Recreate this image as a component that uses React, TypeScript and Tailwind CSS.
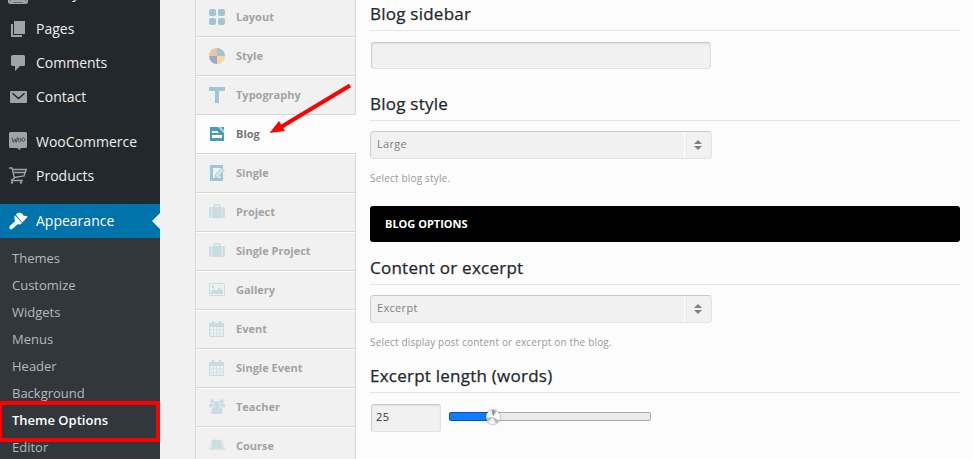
import type { ReactNode } from "react";

const adminIcon = "size-5 shrink-0 overflow-visible fill-current";

const GalleryMenuIcon = () => (
  <svg viewBox="0 0 20 20" className={adminIcon}><rect x="0" y="1" width="20" height="20" rx="2.500" /><path d="M2.500 12v6.500M17.500 12v6.500M5 19.500h10" stroke="#6c7175" strokeWidth="1" fill="none" /></svg>
);
const PagesIcon = () => (
  <svg viewBox="0 0 20 20" className={adminIcon}><path d="M6 2h11v13H6zM3 5h2v11h9v2H3z" /></svg>
);
const CommentIcon = () => (
  <svg viewBox="0 0 20 20" className={adminIcon}><path d="M5 2h10.500q1.500 0 1.500 1.500v8q0 1.500-1.500 1.500H12l-5 5v-5H5q-2 0-2-1.500v-8Q3 2 5 2z" /></svg>
);
const MailIcon = () => (
  <svg viewBox="0 0 20 20" className={adminIcon}><rect x="2" y="4" width="17" height="12" rx="1" /><path d="M4.500 6.300l6 5.200 6-5.200" fill="none" stroke="#23282d" strokeWidth="1.500" /></svg>
);
const WooIcon = () => (
  <svg viewBox="0 0 20 20" className={adminIcon}><path d="M2.500 0h15q1.500 0 1.500 1.500v13q0 1.500-1.500 1.500H12.500l-.5 2.200L9 16H2.500Q1 16 1 14.500v-13Q1 0 2.500 0z" /><path d="M4 5.500l1.200 5L7 7l1.200 3.500L9.500 5" fill="none" stroke="#4a4f53" strokeWidth="1" /><circle cx="11.500" cy="8" r="1.600" fill="none" stroke="#4a4f53" /><circle cx="15.300" cy="7.600" r="1.600" fill="none" stroke="#4a4f53" /></svg>
);
const CartIcon = () => (
  <svg viewBox="0 0 20 20" className={adminIcon}><path d="M1 2h3l2.500 10.500M3 14.500h12M4.800 3.500H18.300L16 9.800 6 11.500M5.500 6.500h11.500" fill="none" stroke="currentColor" strokeWidth="1.300" /><path d="M6.500 12L3 14.500" stroke="currentColor" strokeWidth="1.200" /><circle cx="4" cy="16.500" r="1.200" /><circle cx="13" cy="16.500" r="1.200" /></svg>
);
const BrushIcon = () => (
  <svg viewBox="0 0 20 20" className={adminIcon}><path d="M8.500 2.800L11.500 1.500l3 1.200.8 1.800 4.600.9-5.500 6L8 3.700z" /><path d="M7 4.300l7 7.600-1.800 1.500-2.700-.2-4.900 4.600q-1.600 1.200-2.800 0-1.200-1.400.2-3l5-4.500-.8-3.800z" /></svg>
);

const tabIcon = "size-4 shrink-0 fill-current";

const LayoutIcon = () => (
  <svg viewBox="0 0 16 16" className={tabIcon}><rect width="7" height="7" rx="2" /><rect x="9" width="7" height="7" rx="2" /><rect y="9" width="7" height="7" rx="2" /><rect x="9" y="9" width="7" height="7" rx="2" /></svg>
);
const StyleIcon = () => (
  <svg viewBox="0 0 16 16" className={tabIcon}><path d="M8 8V0a8 8 0 0 1 8 8z" /><path d="M8 8H0a8 8 0 0 1 8-8z" fill="#f1c59b" /><path d="M8 8v8a8 8 0 0 1-8-8z" fill="#9ea6cf" /><path d="M8 8h8a8 8 0 0 1-8 8z" fill="#f5da9a" /></svg>
);
const TypeIcon = () => (
  <svg viewBox="0 0 16 16" className={tabIcon}><path d="M0 0h16v4h-6v12H6V4H0z" /></svg>
);
const BlogIcon = () => (
  <svg viewBox="0 0 16 16" className={tabIcon}><path d="M1 1h8l6 6v8H1z" /><path d="M9.500 1H11l4 4v1.500z" opacity=".55" /><path d="M11.500 1H15v3.500z" /><path d="M3 5h5.500l1 2H3zM3 9h10v3H3z" fill="#fff" /></svg>
);
const EditIcon = () => (
  <svg viewBox="0 0 16 16" className={tabIcon}><path d="M1 0h13v3l-1.500 1-.5-1H4v10h7.500V9.500L14 7v9H1z" /><path d="M12.500 2.800l2.800 2.500-6 6.500-3.300 1.200.7-3.500z" fill="#d3e4ea" stroke="currentColor" strokeWidth=".8" /></svg>
);
const BriefcaseIcon = () => (
  <svg viewBox="0 0 16 16" className={tabIcon}><path d="M3.300 3H4.500V1.500q0-1.500 1.500-1.500h4q1.500 0 1.500 1.500V3h1.200v11H3.300zM6 3h4V1.500H6zM2.500 3v11H2q-2 0-2-2V5q0-2 2-2zm11 0h.5q2 0 2 2v7q0 2-2 2h-.5z" fillRule="evenodd" /></svg>
);
const GalleryIcon = () => (
  <svg viewBox="0 0 16 16" className={tabIcon}><rect x=".5" y="1.500" width="15" height="12" rx=".7" fill="none" stroke="currentColor" /><circle cx="3.800" cy="4.800" r="1.500" /><path d="M2 12V9.500L5 7l2 2 3.500-4L14 8.500V12z" /></svg>
);
const CalendarIcon = () => (
  <svg viewBox="0 0 16 16" className={tabIcon}><rect y="2" width="15" height="14" rx="1" /><rect x="2.500" y="0" width="3" height="4" rx="1" /><rect x="9.500" y="0" width="3" height="4" rx="1" /><path d="M1.200 6h2.800v2.500H1.200zm3.600 0h2.500v2.500H4.800zm3.300 0h2.500v2.500H8.100zm3.400 0h2.500v2.500h-2.500zM1.200 9.200h2.800v2.500H1.200zm3.600 0h2.500v2.500H4.800zm3.300 0h2.500v2.500H8.100zm3.400 0h2.500v2.500h-2.500zM1.200 12.500h2.800v2.200H1.200zm3.600 0h2.500v2.200H4.800zm3.300 0h2.500v2.200H8.100zm3.400 0h2.500v2.200h-2.500z" fill="#f1f1f1" /></svg>
);
const UsersIcon = () => (
  <svg viewBox="0 0 16 16" className={tabIcon}><circle cx="8" cy="5" r="3" /><path d="M4.500 8h7q2.500 2 2.500 5 0 2-2 2H4q-2 0-2-2 0-3 2.500-5z" /><circle cx="3.200" cy="2.300" r="2.100" /><circle cx="12.800" cy="2.300" r="2.100" /><path d="M0 8q-.2-3.500 1.500-3.500h2.700q.2 2 1 2.800-1.500 0-2.700 1H1q-1 0-1-.3zm16 0q.2-3.500-1.500-3.500h-2.700q-.2 2-1 2.800 1.500 0 2.700 1H15q1 0 1-.3z" /></svg>
);
const CourseIcon = () => (
  <svg viewBox="0 0 16 16" className={tabIcon}><path d="M1.500 2.500Q6 1 8 2.500q2-1.500 6.500 0L16 11H0z" opacity=".4" /><path d="M3.500 2Q7 1 7.800 2.500v8Q6 9.500 3 10.500zM8.300 2.500Q9.500 1 12 2l1.200 8.500Q10 9.500 8.300 10.800z" /><path d="M0 11h16" fill="none" stroke="currentColor" /></svg>
);

type Item = { label: string; icon: ReactNode; active?: boolean };

const mainItems: Item[] = [
  { label: "Pages", icon: <PagesIcon /> },
  { label: "Comments", icon: <CommentIcon /> },
  { label: "Contact", icon: <MailIcon /> },
];
const shopItems: Item[] = [
  { label: "WooCommerce", icon: <WooIcon /> },
  { label: "Products", icon: <CartIcon /> },
];
const subItems = ["Themes", "Customize", "Widgets", "Menus", "Header", "Background", "Theme Options", "Editor"];

const tabs: (Item & { faded?: boolean })[] = [
  { label: "Layout", icon: <LayoutIcon /> },
  { label: "Style", icon: <StyleIcon /> },
  { label: "Typography", icon: <TypeIcon /> },
  { label: "Blog", icon: <BlogIcon />, active: true },
  { label: "Single", icon: <EditIcon /> },
  { label: "Project", icon: <BriefcaseIcon />, faded: true },
  { label: "Single Project", icon: <BriefcaseIcon />, faded: true },
  { label: "Gallery", icon: <GalleryIcon />, faded: true },
  { label: "Event", icon: <CalendarIcon />, faded: true },
  { label: "Single Event", icon: <CalendarIcon />, faded: true },
  { label: "Teacher", icon: <UsersIcon />, faded: true },
  { label: "Course", icon: <CourseIcon />, faded: true },
];

function AdminItem({ label, icon, active }: Item) {
  return (
    <div className={`relative flex h-[34px] shrink-0 items-center gap-2 pl-2 text-sm ${active ? "bg-[#0073aa] text-white" : "text-[#eee]"}`}>
      <span className={active ? "text-white" : "text-[#9ea3a8]"}>{icon}</span>
      <span>{label}</span>
      {active && <span className="absolute right-0 top-[9px] border-y-8 border-r-8 border-y-transparent border-r-[#f1f1f1]" />}
    </div>
  );
}

function Heading({ children }: { children: ReactNode }) {
  return <h3 className="h-[30px] shrink-0 border-b border-[#e5e5e5] text-[17px] leading-[26px] font-normal tracking-[0.24px] text-[#23282d] [-webkit-text-stroke:0.25px]">{children}</h3>;
}

function Select({ value }: { value: string }) {
  return (
    <div className="mt-[10px] flex h-7 w-[342px] shrink-0 items-stretch rounded border border-t-[#c9c9c9] border-r-[#e2e2e2] border-b-[#e2e2e2] border-l-[#d0d0d0] bg-[#f1f1f1] text-[11px] tracking-[0.32px] text-[#808080]">
      <span className="flex-1 pl-1.5 leading-[24px]">{value}</span>
      <span className="flex w-[27px] items-center justify-center border-l border-white">
        <svg viewBox="0 0 8 10" className="h-[10px] w-2 fill-[#808080]"><path d="M4 0l4 4H0zM0 6h8l-4 4z" /></svg>
      </span>
    </div>
  );
}

export default function App() {
  return (
    <div className="relative flex h-[459px] w-[973px] overflow-hidden bg-[#f1f1f1] font-['Open_Sans',sans-serif]">
      <aside className="relative flex w-40 shrink-0 flex-col bg-[#23282d]">
        <div className="-mt-6 mb-0.5 tracking-[-0.4px]"><AdminItem label="Gallery" icon={<GalleryMenuIcon />} /></div>
        {mainItems.map((item) => <AdminItem key={item.label} {...item} />)}
        <div className="h-[11px] shrink-0" />
        {shopItems.map((item) => <AdminItem key={item.label} {...item} />)}
        <div className="h-[11px] shrink-0" />
        <AdminItem label="Appearance" icon={<BrushIcon />} active />
        <ul className="flex-1 bg-[#32373c] pt-[7px] pl-3 text-[13px]">
          {subItems.map((label) => (
            <li key={label} className={`h-[27px] leading-[27px] ${label === "Theme Options" ? "font-semibold text-white" : "text-[#b4b9be]"}`}>{label}</li>
          ))}
        </ul>
        <div className="absolute top-[401px] left-0 h-[41px] w-40 border-y-4 border-r-4 border-l-2 border-[#fe0000]" />
      </aside>

      <nav className="ml-[35px] flex w-[161px] shrink-0 flex-col border-l border-[#d9d9d9]">
        <div className="-mt-0.5" />
        {tabs.map(({ label, icon, active, faded }) => (
          <div
            key={label}
            className={`flex h-[39px] shrink-0 items-center gap-[11px] border-b border-b-[#d6d6d6] pl-[13px] text-[11px] font-bold ${
              active ? "bg-[#fcfcfc] text-[#777]" : "border-r border-r-[#d9d9d9] text-[#a3a3a3] shadow-[inset_0_1px_0_#fff]"
            }`}
          >
            <span className={active ? "text-[#4a9bb5]" : faded ? "text-[#c8dce3]" : "text-[#9fc6d2]"}>{icon}</span>
            <span>{label}</span>
          </div>
        ))}
      </nav>

      <main className="flex flex-1 flex-col bg-[#fcfcfc] pt-px pr-[13px] pl-[14px]">
        <Heading>Blog sidebar</Heading>
        <div className="mt-[11px] ml-px h-[27px] w-[340px] shrink-0 rounded-[3px] border border-t-[#c9c9c9] border-r-[#e2e2e2] border-b-[#e2e2e2] border-l-[#d0d0d0] bg-[#f1f1f1] shadow-[inset_0_1px_2px_rgba(0,0,0,0.07)]" />
        <div className="h-[22px] shrink-0" />
        <Heading>Blog style</Heading>
        <Select value="Large" />
        <p className="mt-[11px] h-4 shrink-0 text-[10px] leading-4 tracking-[0.18px] text-[#9a9a9a]">Select blog style.</p>
        <div className="mt-5 h-9 shrink-0 rounded-[3px] bg-black pl-[15px] text-[11px] leading-9 font-bold text-white">BLOG OPTIONS</div>
        <div className="h-[13px] shrink-0" />
        <Heading>Content or excerpt</Heading>
        <Select value="Excerpt" />
        <p className="mt-[11px] h-4 shrink-0 text-[10px] leading-4 tracking-[0.18px] text-[#9a9a9a]">Select display post content or excerpt on the blog.</p>
        <div className="h-[13px] shrink-0" />
        <Heading>Excerpt length (words)</Heading>
        <div className="mt-[11px] ml-px flex items-center">
          <div className="h-7 w-[70px] rounded-[3px] border border-t-[#c9c9c9] border-r-[#e2e2e2] border-b-[#e2e2e2] border-l-[#d0d0d0] bg-[#f1f1f1] pl-1 text-[11px] leading-[24px] tracking-[0.5px] text-[#32373c] shadow-[inset_0_1px_2px_rgba(0,0,0,0.07)]">25</div>
          <div className="relative mt-[-3px] ml-2 h-[9px] w-[202px] rounded-[2px] border border-[#aaa] bg-[#ebebeb]">
            <div className="-mt-px -ml-px h-[9px] w-11 rounded-l-[2px] border border-[#0059b8] bg-[#107efa]" />
            <div className="absolute -top-[3px] left-9 size-[14px] rounded-full bg-[conic-gradient(#777,#f5f5f5_12%,#fff_30%,#aaa_38%,#f5f5f5_48%,#eee_60%,#aaa_68%,#fff_78%,#eee_95%,#777)] shadow-[0_0_1px_1px_rgba(0,0,0,0.2)]" />
          </div>
        </div>
      </main>

      <svg viewBox="0 0 973 459" className="pointer-events-none absolute inset-0 size-full">
        <path d="M350 85.500L281 127" stroke="#fe0000" strokeWidth="4" />
        <path d="M269.500 133l9.500-12 6 10z" fill="#fe0000" />
      </svg>
    </div>
  );
}
